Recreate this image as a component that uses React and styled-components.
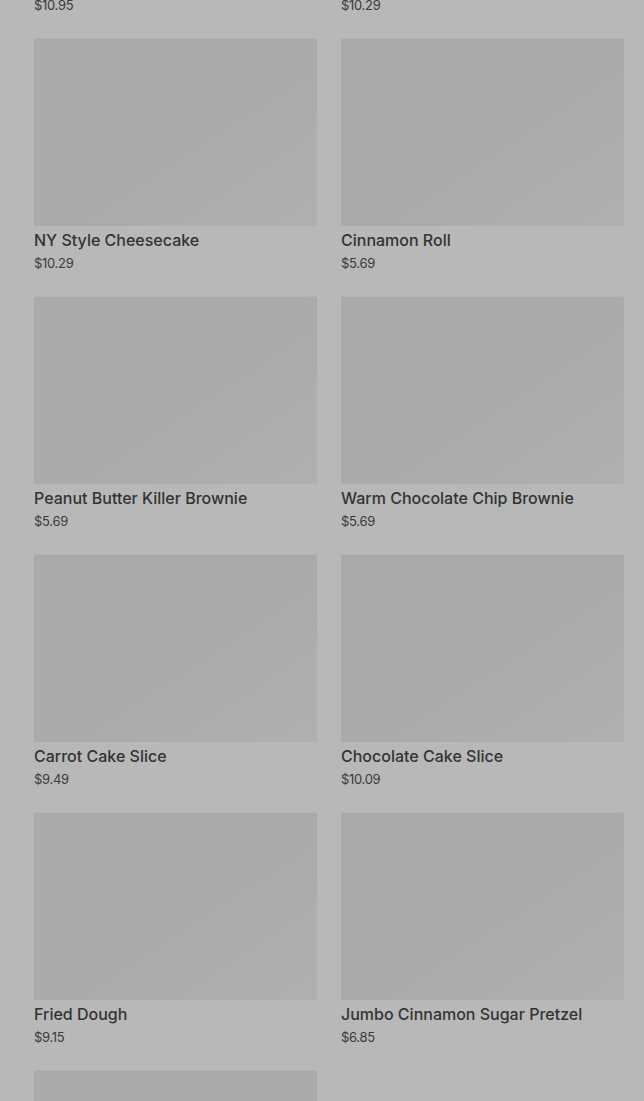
import React from "react";
import styled, { createGlobalStyle } from "styled-components";

const Global = createGlobalStyle`
  html, body {
    margin: 0;
    padding: 0;
    background: #b8b8b8;
    overflow: hidden;
  }
  body {
    font-family: Inter, "Noto Sans", "Liberation Sans", sans-serif;
  }
`;

const Page = styled.div`
  width: 644px;
  height: 1101px;
  overflow: hidden;
  background: #b8b8b8;
`;

const Grid = styled.div`
  margin-top: -220px;
  padding: 0 20px 0 34px;
  display: grid;
  grid-template-columns: 283px 283px;
  column-gap: 24px;
  row-gap: 24px;
`;

const Card = styled.div`
  display: flex;
  flex-direction: column;
`;

const Thumb = styled.div`
  height: 188px;
  background: linear-gradient(to bottom right, #aaaaaa 50%, #b0b0b0 100%);
  border-top: 1px solid #b3b3b3;
  box-sizing: border-box;
`;

const Title = styled.div`
  margin-top: 4px;
  font-size: 16px;
  line-height: 20px;
  font-weight: 500;
  color: #333333;
  white-space: nowrap;
`;

const Price = styled.div`
  margin-top: 4px;
  font-size: 13px;
  line-height: 18px;
  font-weight: 400;
  color: #3a3a3a;
  letter-spacing: -0.3px;
`;

const items = [
  { name: "Chocolate Chunk Cookie", price: "$10.95" },
  { name: "Brownie Sundae", price: "$10.29" },
  { name: "NY Style Cheesecake", price: "$10.29" },
  { name: "Cinnamon Roll", price: "$5.69" },
  { name: "Peanut Butter Killer Brownie", price: "$5.69" },
  { name: "Warm Chocolate Chip Brownie", price: "$5.69" },
  { name: "Carrot Cake Slice", price: "$9.49" },
  { name: "Chocolate Cake Slice", price: "$10.09" },
  { name: "Fried Dough", price: "$9.15" },
  { name: "Jumbo Cinnamon Sugar Pretzel", price: "$6.85" },
  { name: "Apple Pie Slice", price: "$6.49" },
];

export default function App() {
  return (
    <Page>
      <Global />
      <Grid>
        {items.map((it) => (
          <Card key={it.name}>
            <Thumb />
            <Title>{it.name}</Title>
            <Price>{it.price}</Price>
          </Card>
        ))}
      </Grid>
    </Page>
  );
}
